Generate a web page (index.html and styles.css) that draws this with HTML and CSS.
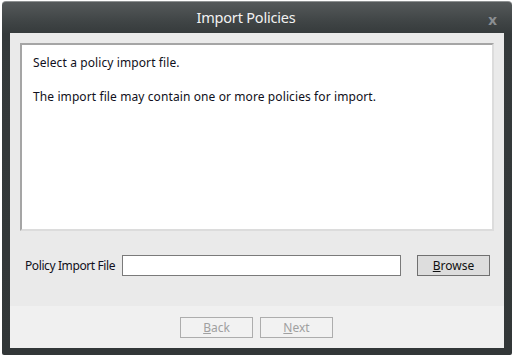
FILE: index.html
```html
<!DOCTYPE html>
<html lang="en">
<head>
  <meta charset="UTF-8">
  <title>Import Policies</title>
  <link rel="stylesheet" href="styles.css">
</head>
<body>
  <div class="window">
    <div class="titlebar">
      <span class="title">Import Policies</span>
      <span class="close">x</span>
    </div>
    <div class="content">
      <div class="panel">
        <p>Select a policy import file.</p>
        <p>The import file may contain one or more policies for import.</p>
      </div>
      <div class="file-row">
        <label for="import-file">Policy Import File</label>
        <input type="text" id="import-file">
        <button type="button" class="browse-btn"><u>B</u>rowse</button>
      </div>
      <div class="footer">
        <button type="button" class="nav-btn" disabled><u>B</u>ack</button>
        <button type="button" class="nav-btn" disabled><u>N</u>ext</button>
      </div>
    </div>
  </div>
</body>
</html>
```

FILE: styles.css
```css
body {
  margin: 0;
  background-color: #FFFFFF;
  font-family: 'Noto Sans', 'Open Sans', sans-serif;
  font-size: 12px;
}
.window {
  margin: 1px 3px 0 2px;
  width: 510px;
  height: 354px;
  box-sizing: border-box;
  padding: 0 8px 7px 8px;
  background: linear-gradient(#55595a 0, #3f4445 20px, #353a3b 32px, #323738 100%);
  border-top: 1px solid #8e9192;
  border-radius: 4px 4px 2px 2px;
  display: flex;
  flex-direction: column;
}
.titlebar {
  height: 31px;
  position: relative;
  display: flex;
  justify-content: center;
  align-items: center;
}
.title {
  color: #F2F2F2;
  font-size: 14.5px;
  letter-spacing: -0.2px;
  margin-left: -22px;
  margin-top: -2px;
}
.close {
  position: absolute;
  right: 7px;
  top: 7px;
  color: #8a8e92;
  font-weight: 700;
  font-size: 15px;
}
.content {
  flex: 1;
  background-color: #EAEAEA;
  display: flex;
  flex-direction: column;
}
.panel {
  margin: 10px 10px 0 10px;
  height: 188px;
  box-sizing: border-box;
  background-color: #FFFFFF;
  border-top: 2px solid #a5a5a5;
  border-left: 2px solid #a5a5a5;
  border-right: 2px solid #dcdcdc;
  border-bottom: 2px solid #dcdcdc;
  padding: 9px 11px;
  color: #101020;
}
.panel p {
  margin: 0 0 17px;
  line-height: 17px;
  letter-spacing: 0.1px;
}
.file-row {
  display: flex;
  align-items: center;
  margin: 24px 0 0 15px;
  height: 21px;
}
.file-row label {
  color: #101020;
  width: 97px;
  flex-shrink: 0;
  white-space: nowrap;
  letter-spacing: -0.4px;
}
.file-row input {
  width: 279px;
  height: 21px;
  flex-shrink: 0;
  box-sizing: border-box;
  border: 1px solid #7a7a7a;
  background-color: #FFFFFF;
  margin: 0;
}
.browse-btn {
  margin-left: 16px;
  width: 73px;
  height: 21px;
  flex-shrink: 0;
  background-color: #DDDDDD;
  border: 1px solid #707070;
  font-family: inherit;
  font-size: 12px;
  color: #101010;
  padding: 0;
}
.footer {
  margin-top: 30px;
  flex: 1;
  background-color: #F0F0F0;
  display: flex;
  justify-content: center;
  align-items: flex-start;
  gap: 7px;
  padding-top: 11px;
  padding-right: 1px;
}
.nav-btn {
  width: 73px;
  height: 21px;
  background-color: #F2F2F2;
  border: 1px solid #ADADAD;
  color: #A0A0A0;
  font-family: inherit;
  font-size: 12px;
  padding: 0;
}
```
